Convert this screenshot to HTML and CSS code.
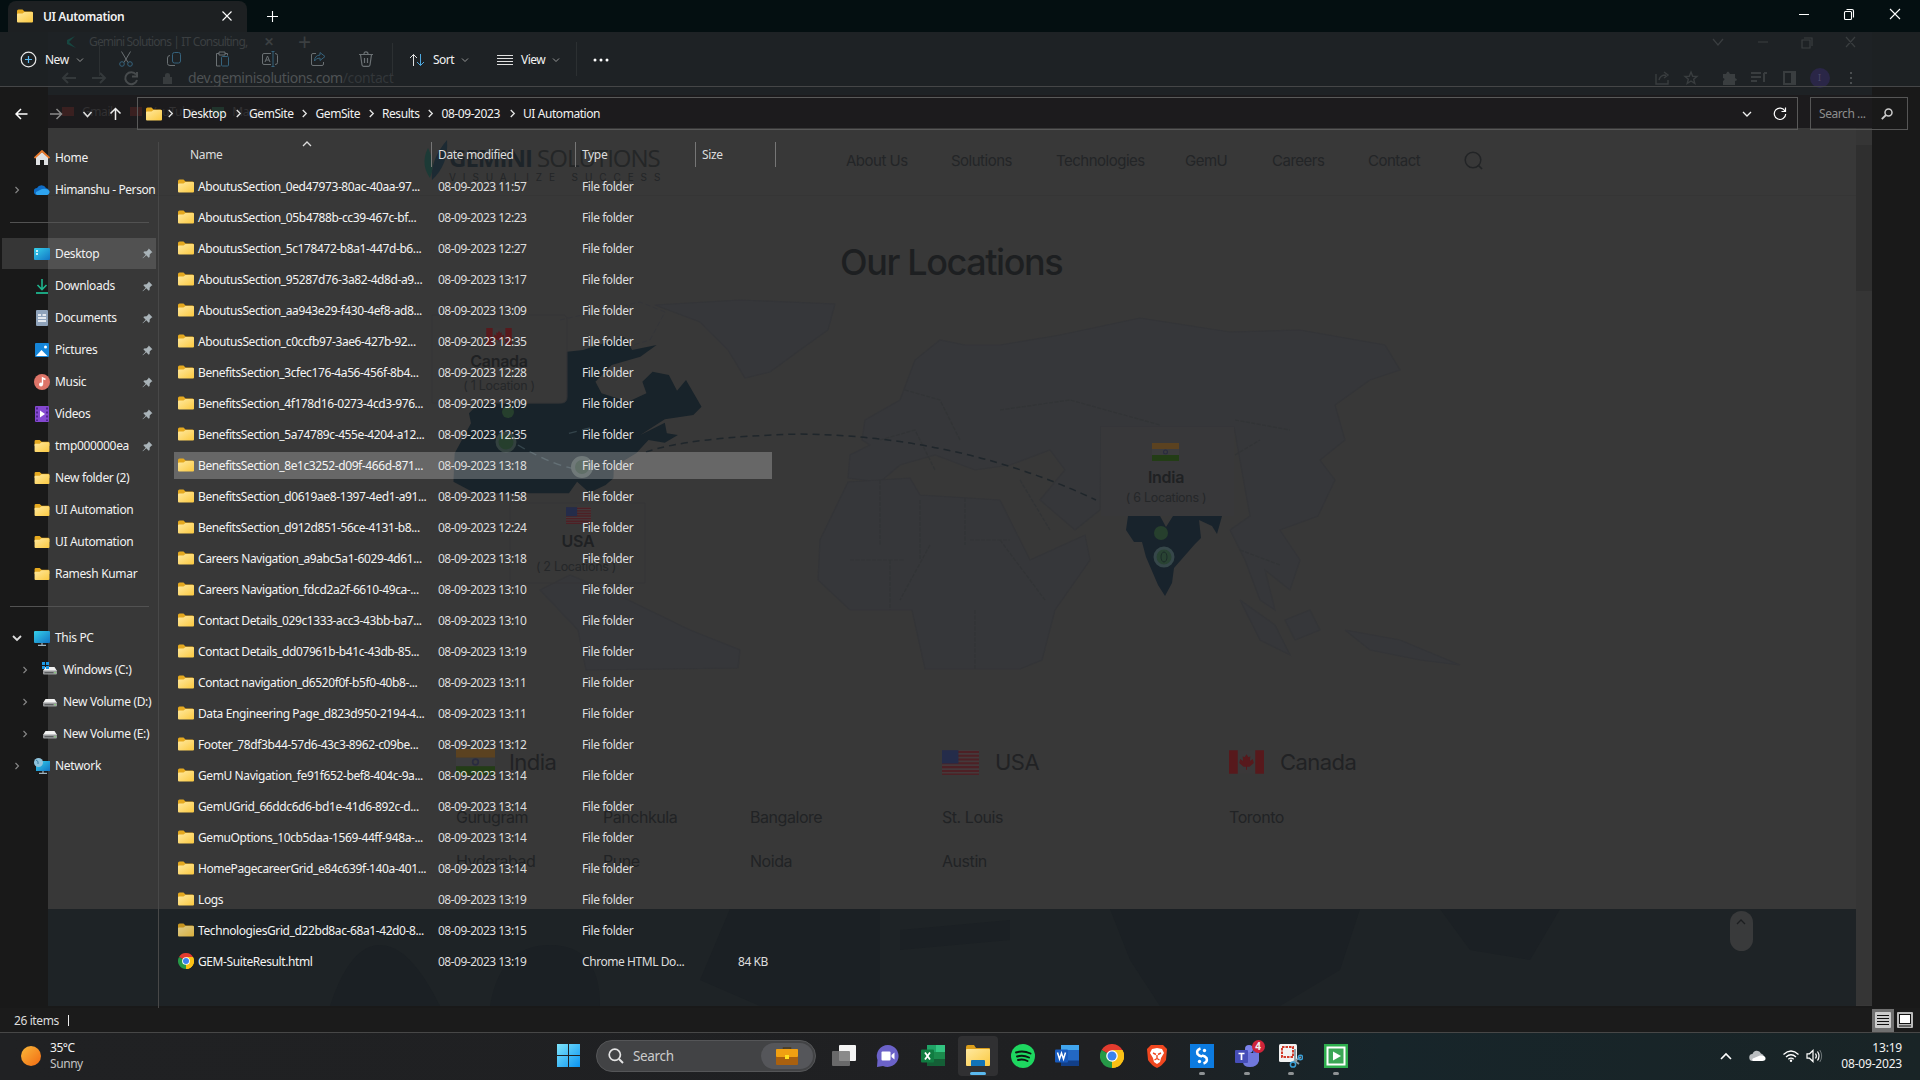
FILE: index.html
```html
<!DOCTYPE html>
<html lang="en">
<head>
<meta charset="utf-8">
<title>UI Automation</title>
<link rel="stylesheet" href="styles.css">
</head>
<body>
<svg class="defs" width="0" height="0" aria-hidden="true">
  <defs>
    <linearGradient id="gFolder" x1="0" y1="0" x2="1" y2="1"><stop offset="0" stop-color="#ffe9a0"/><stop offset="1" stop-color="#fbc940"/></linearGradient>
    <linearGradient id="gWin" x1="0" y1="0" x2="1" y2="1"><stop offset="0" stop-color="#7ee4fb"/><stop offset="1" stop-color="#0a94f2"/></linearGradient>
    <linearGradient id="gSun" x1="0" y1="0" x2="1" y2="1"><stop offset="0" stop-color="#f9b93a"/><stop offset="1" stop-color="#f26a12"/></linearGradient>
    <linearGradient id="gScreen" x1="0" y1="0" x2="1" y2="1"><stop offset="0" stop-color="#35d0ea"/><stop offset="1" stop-color="#1274c4"/></linearGradient>
  </defs>
  <symbol id="folder" viewBox="0 0 16 14"><path d="M0 2Q0 .5 1.500.5H5.500L7.500 2.500H14.500Q16 2.500 16 4V7H0Z" fill="#e5a91f"/><path d="M0 5.500Q0 4.500 1 4.500H5.500L7.500 3H15Q16 3 16 4V12.500Q16 13.500 15 13.500H1Q0 13.500 0 12.500Z" fill="url(#gFolder)"/></symbol>
  <symbol id="pin" viewBox="0 0 12 12"><path d="M7.400.6 11.400 4.600 10.200 5.300 8.400 7.100 8.300 9.900 7.300 10.600 4.700 8 1 11.300.6 11 4 7.300 1.500 4.700 2.200 3.700 5 3.600 6.700 1.800Z" fill="#a9b3b8"/></symbol>
  <symbol id="right" viewBox="0 0 8 10"><path d="M2 1 6 5 2 9" fill="none" stroke="currentColor" stroke-width="1.500"/></symbol>
  <symbol id="down" viewBox="0 0 10 8"><path d="M1 2 5 6 9 2" fill="none" stroke="currentColor" stroke-width="1.300"/></symbol>
  <symbol id="drive" viewBox="0 0 16 16"><path d="M3.500 5H12.500L15 9H1Z" fill="#f2f2f2"/><rect x="1" y="8.500" width="14" height="4" rx="1" fill="#9a9c9e"/><rect x="2.500" y="10" width="9" height="1.300" fill="#5a5c5e"/><rect x="12.500" y="10" width="1.300" height="1.300" fill="#7bd66a"/></symbol>
  <symbol id="chrome" viewBox="0 0 24 24"><path d="M12 12 1.600 6A12 12 0 0 1 22.400 6Z" fill="#e33b2e"/><path d="M12 12 22.400 6A12 12 0 0 1 12 24Z" fill="#fbc116"/><path d="M12 12V24A12 12 0 0 1 1.600 6Z" fill="#269947"/><path d="M12 6H22.400A12 12 0 0 1 12 24L17.200 15Z" fill="#fbc116"/><circle cx="12" cy="12" r="5.800" fill="#fff"/><circle cx="12" cy="12" r="4.500" fill="#3c82ee"/></symbol>
  <symbol id="flagIn" viewBox="0 0 36 24"><path d="M0 0H36V8H0Z" fill="#5b4220"/><path d="M0 8H36V16H0Z" fill="#3c3c3e"/><path d="M0 16H36V24H0Z" fill="#233d16"/><circle cx="18" cy="12" r="2.600" fill="none" stroke="#2a2c40" stroke-width="1.500"/></symbol>
  <symbol id="flagUs" viewBox="0 0 36 24"><path d="M0 0H36V24H0Z" fill="#45393b"/><path d="M0 1.700H36M0 5.400H36M0 9.100H36M0 12.800H36M0 16.500H36M0 20.200H36M0 23.600H36" stroke="#4d2025" stroke-width="2"/><path d="M0 0H16V13H0Z" fill="#242c4a"/></symbol>
  <symbol id="flagCa" viewBox="0 0 36 24"><path d="M0 0H36V24H0Z" fill="#3a3839"/><path d="M0 0H9V24H0ZM27 0H36V24H27Z" fill="#57191c"/><path d="M18 4 20 7 22 6 21.500 11 24.500 9 25.500 13 21 17H18.500V20H17.500V17H15L10.500 13 11.500 9 14.500 11 14 6 16 7Z" fill="#57191c"/></symbol>
</svg>

<main class="desktop">
  <section class="browser">
    <div class="b-tabs">
      <div class="b-tab"><svg width="11" height="14" viewBox="0 0 11 14"><path d="M9 1 3 7 10 13 1 9V5Z" fill="#174640"/></svg><span>Gemini Solutions | IT Consulting,</span><b>✕</b></div>
      <span class="b-plus">+</span>
      <svg class="b-win" width="150" height="16" viewBox="0 0 150 16"><path d="M5 5 10 11 15 5M50 8H60M94 6H102V14H94ZM96 4H104V12M138 3 147 13M147 3 138 13" fill="none" stroke="#3a3e40" stroke-width="1.200"/></svg>
    </div>
    <div class="b-tools">
      <svg width="80" height="16" viewBox="0 0 80 16"><path d="M16 8H3M8 3 3 8 8 13M32 8H45M40 3 45 8 40 13" fill="none" stroke="#34393b" stroke-width="2"/><path d="M76 4.500A6 6 0 1 0 77 10M77 2V6.500H72" fill="none" stroke="#474b4d" stroke-width="2"/></svg>
      <div class="b-url"><svg width="9" height="12" viewBox="0 0 9 12"><path d="M0 5H9V12H0ZM2 5V3Q2 1 4.500 1T7 3V5" fill="#383c3e"/></svg><span>dev.geminisolutions.com<i>/contact</i></span></div>
      <svg class="b-ext" width="208" height="20" viewBox="0 0 208 20"><g fill="none" stroke="#393d3f" stroke-width="1.400"><path d="M3 6V16H15V12M6 12Q7 7 13 7M11 4 15 7 11 10"/><path d="M38 4 39.700 8.200 44 8.400 40.700 11.200 41.800 15.500 38 13 34.200 15.500 35.300 11.200 32 8.400 36.300 8.200Z"/><path d="M98 5H108M98 9H108M98 13H104M111 5V14M111 5H114" stroke-width="2"/><path d="M131 4H142V16H131Z" stroke-width="2"/></g><path d="M70 6H73Q75 1 77 6H82V10Q86 12 82 13V17H70V13Q73 11 70 10ZM138 4H143V16H138Z" fill="#3a3e40"/><circle cx="167" cy="10" r="10" fill="#2a2647"/><text x="165" y="13" font-size="9" fill="#4a4866">I</text><path d="M197 4H199V6H197ZM197 9H199V11H197ZM197 14H199V16H197Z" fill="#4a4e50"/></svg>
    </div>
    <div class="b-marks"><i class="m-gmail"></i><span>Gmail</span><i class="m-yt"></i><span>YouTube</span><i class="m-maps"></i><span>Maps</span></div>
    <div class="page">
      <header class="site-head">
        <svg width="26" height="40" viewBox="0 0 26 40"><path d="M24 0Q26 24 9 40 7 20 24 0Z" fill="#1c2a33"/><path d="M5 8Q-3 24 7 38 13 24 5 8Z" fill="#1c3a36"/></svg>
        <div class="brand"><div class="brand-name"><b>GEMINI</b> SOLUTIONS</div><div class="brand-sub">VISUALIZE SUCCESS</div></div>
        <nav><span>About Us</span><span>Solutions</span><span>Technologies</span><span>GemU</span><span>Careers</span><span>Contact</span></nav>
        <svg class="site-find" width="20" height="20" viewBox="0 0 20 20"><circle cx="9" cy="9" r="7.800" fill="none" stroke="#222426" stroke-width="1.500"/><path d="M14 14 18 18" stroke="#222426" stroke-width="1.700"/></svg>
      </header>
      <h1>Our Locations</h1>
      <svg class="map" width="1824" height="420" viewBox="48 280 1824 420">
        <g fill="#36373a" stroke="#343538" stroke-width="1.200">
          <path d="M655 305 740 300 835 304 828 330 800 350 770 372 745 378 728 350 700 322Z"/>
          <path d="M540 590 570 575 620 596 690 630 740 650 738 668 586 670 578 630Z"/>
          <path d="M965 345 940 340 915 360 900 400 865 420 862 440 870 445 850 455 848 478 880 482 900 465 935 455 975 470 1010 465 1050 450 1065 470 1040 500 1075 530 1100 510 1101 427 1234 427 1250 516 1230 530 1245 560 1260 600 1275 610 1265 570 1290 590 1300 560 1280 530 1318 516 1335 480 1320 460 1345 440 1335 405 1370 380 1400 370 1385 345 1300 330 1230 332 1140 318 1060 335 1000 345Z"/>
          <path d="M848 482 910 478 920 495 1000 500 1030 560 1085 535 1090 560 1055 610 1042 660 1020 669 925 669 912 610 850 610 818 580 820 540Z"/>
          <path d="M1240 600 1260 640 1290 655 1275 625ZM1285 620 1310 610 1320 630 1295 640ZM1345 630 1400 640 1460 665 1420 660 1370 650Z"/>
        </g>
        <path d="M560 320 640 302 665 312 650 340 610 352" fill="none" stroke="#343538" stroke-dasharray="5 3"/>
        <path d="M1101 427H1234V516H1101Z" fill="#38383a"/>
        <path d="M880 480V545M920 500V560M965 498V545M890 560V610M930 545 900 600M970 540H1010M975 610V669M1000 540 1045 600M850 560H905M1020 480 1050 530M880 440 915 430 935 470M905 390 940 400 960 440M1000 410 1070 400 1160 425M1235 420 1290 430M1235 455 1260 440M1240 550 1280 565" fill="none" stroke="#323436" stroke-width="1.200" stroke-dasharray="4 1.500"/>
        <g transform="translate(420 120) scale(.408 .3333)">
          <path d="M360 695 400 690 500 650 520 690 580 675 540 710 470 735 430 785 445 820 510 845 555 820 545 785 570 755 610 765 630 812 652 780 690 860 670 885 600 898 540 945 600 908 605 940 632 945 600 968 560 960 530 1000 475 1040 474 1075 455 1095 415 1118 385 1085 365 1120 135 1120 82 1085 85 1000 125 910 120 880 145 850H340Q360 850 360 830Z" fill="#18232a"/>
          <path d="M240 975Q330 1040 400 1052M365 940 430 920" fill="none" stroke="#34444b" stroke-width="4" stroke-dasharray="20 14"/>
        </g>
        <path d="M432 315H563Q567 315 567 320V397Q567 403 561 403H432ZM510 503H645V583H510Z" fill="none" stroke="#353537"/>
        <path d="M646 452Q690 437 800 434 960 436 1096 500" fill="none" stroke="#1f262b" stroke-width="1.500" stroke-dasharray="7 5"/>
        <path d="M1128 516H1160L1166 527 1173 516H1222L1217 534 1212 526 1199 520 1201 538 1195 544 1174 568 1172 583 1165 596 1158 585 1146 557 1142 542H1134L1126 530Z" fill="#18232c"/>
        <g fill="#263f2d"><circle cx="508" cy="412" r="6"/><circle cx="506" cy="442" r="9" stroke="#33413f" stroke-width="3"/><circle cx="1161" cy="533" r="7"/></g>
        <circle cx="582" cy="467" r="9" fill="#2e4238" stroke="#445050" stroke-width="4"/>
        <circle cx="1164" cy="557" r="9" fill="#294333" stroke="#36474a" stroke-width="3"/><ellipse cx="1164" cy="557" rx="3" ry="5" fill="none" stroke="#1c2b29"/>
        <use href="#flagCa" x="486" y="328" width="26" height="17"/><use href="#flagUs" x="566" y="507" width="25" height="17"/><use href="#flagIn" x="1152" y="443" width="27" height="18"/>
        <g class="map-text"><text class="country" x="499" y="367">Canada</text><text x="499" y="390">( 1 Location )</text><text class="country" x="578" y="547">USA</text><text x="576" y="571">( 2 Locations )</text><text class="country" x="1166" y="483">India</text><text x="1166" y="502">( 6 Locations )</text></g>
      </svg>
      <div class="places">
        <div class="place india"><h2><svg width="39" height="26"><use href="#flagIn"/></svg>India</h2><div class="cities"><span>Gurugram</span><span>Panchkula</span><span>Bangalore</span><span>Hyderabad</span><span>Pune</span><span>Noida</span></div></div>
        <div class="place usa"><h2><svg width="37" height="25"><use href="#flagUs"/></svg>USA</h2><div class="cities"><span>St. Louis</span><span>Austin</span></div></div>
        <div class="place"><h2><svg width="35" height="24"><use href="#flagCa"/></svg>Canada</h2><div class="cities"><span>Toronto</span></div></div>
      </div>
      <footer class="site-foot"><svg width="1808" height="97" viewBox="48 909 1808 97"><g fill="#1b2024"><path d="M730 909H880V1006H760L700 980ZM900 930 1010 920V940L900 950ZM1110 909H1360L1340 970 1280 1006H1160L1130 960ZM490 1006Q500 945 550 945T600 1006ZM330 1006Q350 945 380 945T440 1006ZM1440 909H1560L1530 960 1470 950Z"/></g></svg><span class="totop"><svg width="12" height="8"><use href="#down"/></svg></span></footer>
      <i class="scroll"><i></i></i>
    </div>
  </section>

  <section class="explorer">
    <div class="titlebar">
      <div class="tab"><svg width="16" height="14"><use href="#folder"/></svg><b>UI Automation</b><svg width="10" height="10" viewBox="0 0 10 10"><path d="M.5.5 9.500 9.500M9.500.5.5 9.500" stroke="#fff" stroke-width="1.100"/></svg></div>
      <svg class="newtab" width="11" height="11" viewBox="0 0 11 11"><path d="M5.500 0V11M0 5.500H11" stroke="#fff" stroke-width="1.100"/></svg>
      <svg class="winbtns" width="104" height="14" viewBox="0 0 104 14"><g fill="none" stroke="#fff" stroke-width="1.100"><path d="M1 7.500H11M92 2 102 12M102 2 92 12"/><rect x="46.500" y="4.500" width="7" height="8" rx="1"/><path d="M48.500 2.500H54Q55.500 2.500 55.500 4V10.500"/></g></svg>
    </div>
    <div class="commands">
      <div class="cmd new"><svg width="17" height="17" viewBox="0 0 17 17"><circle cx="8.500" cy="8.500" r="7.300" fill="none" stroke="#e8e8e8" stroke-width="1.200"/><path d="M8.500 5V12M5 8.500H12" stroke="#5cb8ee" stroke-width="1.200"/></svg><span>New</span><svg class="c" width="8" height="6"><use href="#down"/></svg></div>
      <div class="tools">
        <svg viewBox="0 0 16 16"><path d="M3.500.5 10 11.500M12.500.5 6 11.500" stroke="#6b7174"/><g stroke="#35627c" fill="none"><circle cx="4" cy="13" r="2.300"/><circle cx="12" cy="13" r="2.300"/></g></svg>
        <svg viewBox="0 0 16 16"><path d="M4 4.500Q1.500 4.500 1.500 7V12.500Q1.500 14.500 4 14.500H9" fill="none" stroke="#6b7174"/><rect x="6.500" y="1.500" width="8" height="10.500" rx="2" fill="none" stroke="#35627c"/></svg>
        <svg viewBox="0 0 16 16"><path d="M5 2.500H2.500V15H6.500M11 2.500H13.500V4.500M5 1H11V4H5Z" fill="none" stroke="#6b7174"/><rect x="7.500" y="5.500" width="7" height="9.500" rx="1" fill="none" stroke="#35627c"/></svg>
        <svg viewBox="0 0 16 16"><path d="M9 2.500H2Q.5 2.500.5 4V12Q.5 13.500 2 13.500H9M13 2.500Q15.500 2.500 15.500 4.500V11.500Q15.500 13.500 13 13.500M3 11 5.500 5 8 11M4 9H7" fill="none" stroke="#6b7174"/><path d="M11 .5V15.500M9.500.5H12.500M9.500 15.500H12.500" stroke="#35627c"/></svg>
        <svg viewBox="0 0 16 16"><path d="M6 2.500H3Q1.500 2.500 1.500 4V13Q1.500 14.500 3 14.500H12Q13.500 14.500 13.500 13V11" fill="none" stroke="#6b7174"/><path d="M10 1.500 15 5.500 10 9.500V7Q6 7 4.500 10 4.500 4.500 10 4Z" fill="none" stroke="#35627c"/></svg>
        <svg viewBox="0 0 16 16"><path d="M1 3.500H15M2.500 3.500 4 14Q4.200 15.300 5.500 15.300H10.500Q11.800 15.300 12 14L13.500 3.500M6 3Q6 .8 8 .8T10 3M6.500 7V12M9.500 7V12" fill="none" stroke="#6b7174" stroke-width="1.200"/></svg>
      </div>
      <div class="cmd sort"><svg width="16" height="14" viewBox="0 0 16 14"><path d="M4.500 13V1.500M1 5 4.500 1.500 8 5" fill="none" stroke="#e0e0e0"/><path d="M11.500 1V12.500M8 9 11.500 12.500 15 9" fill="none" stroke="#4ea9e0"/></svg><span>Sort</span><svg class="c" width="8" height="6"><use href="#down"/></svg></div>
      <div class="cmd view"><svg width="16" height="12" viewBox="0 0 16 12"><path d="M0 1.500H16M0 4.500H16M0 7.500H16M0 10.500H16" stroke="#e0e0e0"/></svg><span>View</span><svg class="c" width="8" height="6"><use href="#down"/></svg></div>
      <svg class="dots" width="16" height="4" viewBox="0 0 16 4"><circle cx="2" cy="2" r="1.500"/><circle cx="8" cy="2" r="1.500"/><circle cx="14" cy="2" r="1.500"/></svg>
    </div>
    <div class="address">
      <svg class="nav" width="108" height="14" viewBox="0 0 108 14"><g fill="none" stroke-width="1.500"><path d="M12.500 7H1M6 2 1 7 6 12" stroke="#fff"/><path d="M35 7H46.500M41.500 2 46.500 7 41.500 12" stroke="#8a8a8a"/><path d="M68.500 5 72.500 9.500 76.500 5" stroke="#ddd"/><path d="M100.500 13V1.500M95.500 6.500 100.500 1.500 105.500 6.500" stroke="#eee"/></g></svg>
      <div class="pathbox">
        <svg width="16" height="14"><use href="#folder"/></svg>
        <svg class="r"><use href="#right"/></svg><span>Desktop</span><svg class="r"><use href="#right"/></svg><span>GemSite</span><svg class="r"><use href="#right"/></svg><span>GemSite</span><svg class="r"><use href="#right"/></svg><span>Results</span><svg class="r"><use href="#right"/></svg><span class="w58">08-09-2023</span><svg class="r"><use href="#right"/></svg><span class="w80">UI Automation</span>
        <svg class="drop" width="10" height="8"><use href="#down"/></svg>
        <svg width="14" height="14" viewBox="0 0 14 14"><path d="M12 4A5.700 5.700 0 1 0 12.700 7M12.500.5V4.500H8.500" fill="none" stroke="#fff" stroke-width="1.200"/></svg>
      </div>
      <div class="searchbox"><span>Search ...</span><svg width="12" height="12" viewBox="0 0 12 12"><circle cx="7.500" cy="4.500" r="3.500" fill="none" stroke="#ccc" stroke-width="1.500"/><path d="M5 7 .8 11.200" stroke="#ccc" stroke-width="1.800"/></svg></div>
    </div>
    <div class="body">
      <aside class="side">
        <div class="s"><svg viewBox="0 0 16 16"><path d="M2 7 8 2 14 7V15H10V10H6V15H2Z" fill="#dfe1e3"/><path d="M.5 8 8 1 15.500 8" fill="none" stroke="#e8792b" stroke-width="1.800"/></svg><span>Home</span></div>
        <div class="s"><svg class="r"><use href="#right"/></svg><svg viewBox="0 0 16 16"><path d="M3.500 13A3.500 3.500 0 0 1 3 6 5 5 0 0 1 12 6 3.700 3.700 0 0 1 13 13Z" fill="#0f6cc4"/><path d="M3 13Q1 12 2 10L8 7Q13 6 15.500 9 16 12 13 13Z" fill="#2ea4f0"/></svg><span class="account">Himanshu - Person</span></div>
        <hr>
        <div class="s on"><svg viewBox="0 0 16 16"><rect y="2" width="16" height="12" rx="1" fill="url(#gScreen)"/><path d="M2 5H4M2 8H4" stroke="#fff" stroke-width="1.500"/></svg><span>Desktop</span><svg class="pin"><use href="#pin"/></svg></div>
        <div class="s"><svg viewBox="0 0 16 16"><path d="M8 1V11M3.500 7 8 11.500 12.500 7" fill="none" stroke="#1eb58e" stroke-width="1.600"/><path d="M2 15H14" stroke="#1eb58e" stroke-width="1.800"/></svg><span>Downloads</span><svg class="pin"><use href="#pin"/></svg></div>
        <div class="s"><svg viewBox="0 0 16 16"><rect x="2" width="12" height="16" rx="1" fill="#8fa3bb"/><path d="M4 5H7M4 8H12M4 11H12M8.500 5H12" stroke="#fff" stroke-width="1.500"/></svg><span>Documents</span><svg class="pin"><use href="#pin"/></svg></div>
        <div class="s"><svg viewBox="0 0 16 16"><rect x="1" y="1" width="14" height="14" rx="1" fill="#1585d8"/><path d="M2 14 7.500 8 13.500 14Z" fill="#fff"/><circle cx="11.500" cy="5" r="1.500" fill="#fff"/></svg><span>Pictures</span><svg class="pin"><use href="#pin"/></svg></div>
        <div class="s"><svg viewBox="0 0 16 16"><circle cx="8" cy="8" r="8" fill="#dd7468"/><circle cx="7" cy="10.500" r="2" fill="#fff"/><path d="M8.500 10.500V4L11.500 5.500" fill="none" stroke="#fff" stroke-width="1.400"/></svg><span>Music</span><svg class="pin"><use href="#pin"/></svg></div>
        <div class="s"><svg viewBox="0 0 16 16"><rect x="1" width="14" height="16" rx="1" fill="#8448d0"/><path d="M3 1.500V15M13 1.500V15" stroke="#4f248e" stroke-width="2" stroke-dasharray="2 2"/><path d="M6 4.500 11 8 6 11.500Z" fill="#fff"/></svg><span>Videos</span><svg class="pin"><use href="#pin"/></svg></div>
        <div class="s"><svg viewBox="0 0 16 16"><use href="#folder" y="1.500" width="16" height="13"/></svg><span>tmp000000ea</span><svg class="pin"><use href="#pin"/></svg></div>
        <div class="s"><svg viewBox="0 0 16 16"><use href="#folder" y="1.500" width="16" height="13"/></svg><span>New folder (2)</span></div>
        <div class="s"><svg viewBox="0 0 16 16"><use href="#folder" y="1.500" width="16" height="13"/></svg><span>UI Automation</span></div>
        <div class="s"><svg viewBox="0 0 16 16"><use href="#folder" y="1.500" width="16" height="13"/></svg><span>UI Automation</span></div>
        <div class="s"><svg viewBox="0 0 16 16"><use href="#folder" y="1.500" width="16" height="13"/></svg><span>Ramesh Kumar</span></div>
        <hr>
        <div class="s"><svg class="r open" viewBox="0 0 10 8"><path d="M1 2 5 6 9 2" fill="none" stroke="#ddd" stroke-width="1.800"/></svg><svg viewBox="0 0 16 16"><rect y="1" width="16" height="12" rx="1" fill="url(#gScreen)"/><path d="M8 13V15.300M4 15.300H12" stroke="#9fb4c0" stroke-width="1.200"/></svg><span>This PC</span></div>
        <div class="s sub"><svg class="r"><use href="#right"/></svg><svg viewBox="0 0 16 16"><use href="#drive"/><path d="M0 0H3V3H0ZM4 0H7V3H4ZM0 4H3V7H0ZM4 4H7V7H4Z" fill="#1e9be8"/></svg><span>Windows (C:)</span></div>
        <div class="s sub"><svg class="r"><use href="#right"/></svg><svg viewBox="0 0 16 16"><use href="#drive"/></svg><span>New Volume (D:)</span></div>
        <div class="s sub"><svg class="r"><use href="#right"/></svg><svg viewBox="0 0 16 16"><use href="#drive"/></svg><span>New Volume (E:)</span></div>
        <div class="s"><svg class="r"><use href="#right"/></svg><svg viewBox="0 0 16 16"><rect x="2" y="3" width="14" height="10" fill="url(#gScreen)"/><path d="M9 13V15.300M5 15.300H13" stroke="#9fb4c0" stroke-width="1.200"/><circle cx="4.500" cy="4.500" r="4.500" fill="#8fc3dc"/><path d="M2 2Q5 3 4 6" stroke="#3b7fa4" fill="none"/></svg><span>Network</span></div>
      </aside>
      <div class="files">
        <div class="head"><span>Name<svg width="10" height="8"><use href="#down"/></svg></span><span>Date modified</span><span>Type</span><span>Size</span></div>
        <div class="f"><svg><use href="#folder"/></svg><span>AboutusSection_0ed47973-80ac-40aa-97...</span><span>08-09-2023 11:57</span><span>File folder</span></div>
        <div class="f"><svg><use href="#folder"/></svg><span>AboutusSection_05b4788b-cc39-467c-bf...</span><span>08-09-2023 12:23</span><span>File folder</span></div>
        <div class="f"><svg><use href="#folder"/></svg><span>AboutusSection_5c178472-b8a1-447d-b6...</span><span>08-09-2023 12:27</span><span>File folder</span></div>
        <div class="f"><svg><use href="#folder"/></svg><span>AboutusSection_95287d76-3a82-4d8d-a9...</span><span>08-09-2023 13:17</span><span>File folder</span></div>
        <div class="f"><svg><use href="#folder"/></svg><span>AboutusSection_aa943e29-f430-4ef8-ad8...</span><span>08-09-2023 13:09</span><span>File folder</span></div>
        <div class="f"><svg><use href="#folder"/></svg><span>AboutusSection_c0ccfb97-3ae6-427b-92...</span><span>08-09-2023 12:35</span><span>File folder</span></div>
        <div class="f"><svg><use href="#folder"/></svg><span>BenefitsSection_3cfec176-4a56-456f-8b4...</span><span>08-09-2023 12:28</span><span>File folder</span></div>
        <div class="f"><svg><use href="#folder"/></svg><span>BenefitsSection_4f178d16-0273-4cd3-976...</span><span>08-09-2023 13:09</span><span>File folder</span></div>
        <div class="f"><svg><use href="#folder"/></svg><span>BenefitsSection_5a74789c-455e-4204-a12...</span><span>08-09-2023 12:35</span><span>File folder</span></div>
        <div class="f sel"><svg><use href="#folder"/></svg><span>BenefitsSection_8e1c3252-d09f-466d-871...</span><span>08-09-2023 13:18</span><span>File folder</span></div>
        <div class="f"><svg><use href="#folder"/></svg><span>BenefitsSection_d0619ae8-1397-4ed1-a91...</span><span>08-09-2023 11:58</span><span>File folder</span></div>
        <div class="f"><svg><use href="#folder"/></svg><span>BenefitsSection_d912d851-56ce-4131-b8...</span><span>08-09-2023 12:24</span><span>File folder</span></div>
        <div class="f"><svg><use href="#folder"/></svg><span>Careers Navigation_a9abc5a1-6029-4d61...</span><span>08-09-2023 13:18</span><span>File folder</span></div>
        <div class="f"><svg><use href="#folder"/></svg><span>Careers Navigation_fdcd2a2f-6610-49ca-...</span><span>08-09-2023 13:10</span><span>File folder</span></div>
        <div class="f"><svg><use href="#folder"/></svg><span>Contact Details_029c1333-acc3-43bb-ba7...</span><span>08-09-2023 13:10</span><span>File folder</span></div>
        <div class="f"><svg><use href="#folder"/></svg><span>Contact Details_dd07961b-b41c-43db-85...</span><span>08-09-2023 13:19</span><span>File folder</span></div>
        <div class="f"><svg><use href="#folder"/></svg><span>Contact navigation_d6520f0f-b5f0-40b8-...</span><span>08-09-2023 13:11</span><span>File folder</span></div>
        <div class="f"><svg><use href="#folder"/></svg><span>Data Engineering Page_d823d950-2194-4...</span><span>08-09-2023 13:11</span><span>File folder</span></div>
        <div class="f"><svg><use href="#folder"/></svg><span>Footer_78df3b44-57d6-43c3-8962-c09be...</span><span>08-09-2023 13:12</span><span>File folder</span></div>
        <div class="f"><svg><use href="#folder"/></svg><span>GemU Navigation_fe91f652-bef8-404c-9a...</span><span>08-09-2023 13:14</span><span>File folder</span></div>
        <div class="f"><svg><use href="#folder"/></svg><span>GemUGrid_66ddc6d6-bd1e-41d6-892c-d...</span><span>08-09-2023 13:14</span><span>File folder</span></div>
        <div class="f"><svg><use href="#folder"/></svg><span>GemuOptions_10cb5daa-1569-44ff-948a-...</span><span>08-09-2023 13:14</span><span>File folder</span></div>
        <div class="f"><svg><use href="#folder"/></svg><span>HomePagecareerGrid_e84c639f-140a-401...</span><span>08-09-2023 13:14</span><span>File folder</span></div>
        <div class="f"><svg><use href="#folder"/></svg><span>Logs</span><span>08-09-2023 13:19</span><span>File folder</span></div>
        <div class="f"><svg class="dim"><use href="#folder"/></svg><span>TechnologiesGrid_d22bd8ac-68a1-42d0-8...</span><span>08-09-2023 13:15</span><span>File folder</span></div>
        <div class="f"><svg class="ch"><use href="#chrome"/></svg><span>GEM-SuiteResult.html</span><span>08-09-2023 13:19</span><span>Chrome HTML Do...</span><span class="size">84 KB</span></div>
      </div>
    </div>
    <div class="status"><span>26 items</span><i></i>
      <div class="vbtn on"><svg width="16" height="16" viewBox="0 0 16 16"><rect width="16" height="16" rx="1" fill="#ccc"/><path d="M2 3.500H14M2 6.500H14M2 9.500H14M2 12.500H14" stroke="#111"/></svg></div>
      <div class="vbtn"><svg width="16" height="16" viewBox="0 0 16 16"><rect width="16" height="16" rx="1" fill="#bbb"/><rect x="2.500" y="2.500" width="11" height="9" fill="#fff" stroke="#111"/><path d="M2 14H14" stroke="#111"/></svg></div>
    </div>
  </section>

  <section class="taskbar">
    <div class="weather"><svg width="20" height="20"><circle cx="10" cy="10" r="10" fill="url(#gSun)"/></svg><div><b>35°C</b><span>Sunny</span></div></div>
    <svg class="start" width="23" height="23" viewBox="0 0 23 23"><path d="M0 0H11V11H0ZM12 0H23V11H12ZM0 12H11V23H0ZM12 12H23V23H12Z" fill="url(#gWin)"/></svg>
    <div class="find"><svg width="16" height="16" viewBox="0 0 16 16"><circle cx="6.800" cy="6.800" r="5.600" fill="none" stroke="#e4e4e4" stroke-width="1.700"/><path d="M11 11 15 15" stroke="#e4e4e4" stroke-width="2"/></svg><span>Search</span><div class="bag"><svg width="22" height="18" viewBox="0 0 22 18"><path d="M7.500 3V1H14.500V3" fill="none" stroke="#4a3a1c" stroke-width="1.500"/><rect y="2" width="22" height="16" rx="1" fill="#a9600e"/><rect y="2" width="22" height="8" rx="1" fill="#f0a012"/><rect x="9" y="8" width="4" height="4" fill="#ffdf20"/></svg></div></div>
    <div class="apps">
      <div class="app"><svg viewBox="0 0 24 24"><rect x="7" y="1" width="17" height="16" rx="1" fill="#f4f4f4"/><rect x="0" y="7" width="18" height="15" rx="1" fill="#777" opacity=".85"/></svg></div>
      <div class="app"><svg viewBox="0 0 24 24"><path d="M12 1A11 11 0 1 1 7 22L1 23 1.500 16A11 11 0 0 1 12 1Z" fill="#6b62c8"/><rect x="5.500" y="7.500" width="9" height="9" rx="1" fill="#fff"/><path d="M15.500 11 18.500 8.500V15.500L15.500 13Z" fill="#fff"/></svg></div>
      <div class="app"><svg viewBox="0 0 24 24"><path d="M6 1H24V22H6Z" fill="#1b8a4c"/><path d="M6 1H15V8H6Z" fill="#20a366"/><path d="M15 1H24V8H15Z" fill="#33c481"/><path d="M6 15H24V22H6Z" fill="#145f36"/><rect y="5.500" width="13" height="13" rx="1" fill="#107c41"/><path d="M4 8.500 9 15.500M9 8.500 4 15.500" stroke="#fff" stroke-width="1.800"/></svg></div>
      <div class="app active"><svg viewBox="0 0 24 24"><path d="M0 3Q0 1 2 1H8L10 4H23Q24 4 24 5V10H0Z" fill="#dc9e1a"/><rect y="5" width="24" height="17" rx="1" fill="url(#gFolder)"/><path d="M5 22V17Q5 16 6 16H18Q19 16 19 17V22Z" fill="#1173b8"/></svg></div>
      <div class="app"><svg viewBox="0 0 24 24"><circle cx="12" cy="12" r="12" fill="#1ed760"/><path d="M5 8.500Q12 6 19.500 9.500M6 12.500Q12 10.500 18 13.500M7 16Q12 14.500 16.500 17" fill="none" stroke="#0c1810" stroke-width="1.900" stroke-linecap="round"/></svg></div>
      <div class="app"><svg viewBox="0 0 24 24"><path d="M6 1H24V22H6Z" fill="#2368c4"/><path d="M6 1H24V6H6Z" fill="#41a5ee"/><path d="M6 16.500H24V22H6Z" fill="#123f88"/><rect y="5.500" width="13" height="13" rx="1" fill="#185abd"/><path d="M2.500 8.500 4.500 15 6.500 9 8.500 15 10.500 8.500" fill="none" stroke="#fff" stroke-width="1.500"/></svg></div>
      <div class="app"><svg viewBox="0 0 24 24"><use href="#chrome"/></svg></div>
      <div class="app"><svg viewBox="0 0 24 24"><path d="M6 1H18L22 5 21 16Q18 21 12 24 6 21 3 16L2 5Z" fill="#f1471f"/><path d="M7 5 12 4 17 5 19 9 16 14 15 18 12 20 9 18 8 14 5 9Z" fill="#fff"/><path d="M8 9 11 10.500M16 9 13 10.500M12 11V14M9.500 16 12 14.500 14.500 16" fill="none" stroke="#f1471f" stroke-width="1.400"/></svg></div>
      <div class="app run"><svg viewBox="0 0 24 24"><rect width="24" height="24" fill="#0c7be0"/><path d="M10.500 4.500Q6 6 7.500 10 9 12 12 12.500M13.500 19.500Q18 18 16.500 14 15 12 12 11.500" fill="none" stroke="#fff" stroke-width="2.600"/><circle cx="14.500" cy="6.500" r="1.700" fill="#fff"/><circle cx="9.500" cy="17.500" r="1.700" fill="#fff"/></svg></div>
      <div class="app run"><svg viewBox="0 0 24 24"><circle cx="14" cy="5" r="4" fill="#7b83eb"/><circle cx="21" cy="8" r="3" fill="#5059c9"/><path d="M8 9H24V17Q22 23 15 23T8 18Z" fill="#7078dc"/><rect y="6" width="13" height="13" rx="1" fill="#464eb8"/><path d="M3.500 9.500H9.500M6.500 9.500V16" stroke="#fff" stroke-width="1.700"/></svg><em>4</em></div>
      <div class="app run"><svg viewBox="0 0 24 24"><rect width="18" height="18" rx="1.500" fill="#f2f2f2"/><rect x="3" y="3" width="11" height="10" fill="none" stroke="#d23b2a" stroke-width="2" stroke-dasharray="2.500 1"/><path d="M16 5V17L20 20M22 13 14 18" fill="none" stroke="#8a9aa3" stroke-width="1.800"/><circle cx="14" cy="20.500" r="2.600" fill="none" stroke="#3aa0d8" stroke-width="1.500"/><circle cx="21.500" cy="13.500" r="2.200" fill="none" stroke="#3aa0d8" stroke-width="1.500"/></svg></div>
      <div class="app run"><svg viewBox="0 0 24 24"><rect width="24" height="24" fill="#2eae4e"/><rect x="3.500" y="3.500" width="17" height="17" fill="#3aa655" stroke="#fff" stroke-width="2"/><path d="M9 7.500 17 12 9 16.500Z" fill="#fff"/></svg></div>
    </div>
    <div class="tray">
      <svg width="12" height="8" viewBox="0 0 12 8"><path d="M1 7 6 2 11 7" fill="none" stroke="#fff" stroke-width="1.600"/></svg>
      <svg width="17" height="12" viewBox="0 0 17 12"><path d="M4 11A3.500 3.500 0 0 1 3.500 4 4.500 4.500 0 0 1 12 3.500 4 4 0 0 1 13 11Z" fill="#b9bdc0"/><path d="M4 11Q2 9 5 8L11 5.500Q16 5 16.500 8T13 11Z" fill="#fff"/></svg>
      <svg width="16" height="12" viewBox="0 0 16 12"><g fill="none" stroke="#fff" stroke-width="1.300"><path d="M.5 4.500Q8-2.500 15.500 4.500M3 7Q8 2.500 13 7M5.300 9.200Q8 7 10.700 9.200"/></g><circle cx="8" cy="10.800" r="1.200" fill="#fff"/></svg>
      <svg width="17" height="14" viewBox="0 0 17 14"><path d="M1 4.800H3.500L7 1.500V12.500L3.500 9.200H1Z" fill="none" stroke="#fff" stroke-width="1.200"/><path d="M9.500 4.500Q11.200 7 9.500 9.500M11.500 2.500Q14.500 7 11.500 11.500" fill="none" stroke="#fff" stroke-width="1.200"/><path d="M13.800 1Q17.500 7 13.800 13" fill="none" stroke="#6d7577"/></svg>
    </div>
    <div class="clock"><span>13:19</span><span>08-09-2023</span></div>
  </section>
</main>
</body>
</html>
```
FILE: styles.css
```css
* { box-sizing: border-box; }
html, body { margin: 0; height: 100%; overflow: hidden; }
body { background: #191919; color: #f2f2f2; font: 12px/16px "Noto Sans", "Open Sans", sans-serif; letter-spacing: -.43px; white-space: nowrap; }
svg { display: block; flex: none; }
.defs { position: absolute; }
i { font-style: normal; }
.desktop { position: relative; width: 1920px; height: 1080px; background: linear-gradient(#1d2123 0 86px, #191919 86px); }

/* Browser window lying behind the translucent explorer */
.browser { position: absolute; left: 48px; top: 30px; width: 1824px; height: 976px; display: flex; flex-direction: column; color: #3a3e40; background: #1e2225; }
.b-tabs { height: 28px; display: flex; align-items: center; padding: 0 8px 4px 18px; font-family: "Noto Sans"; }
.b-tabs > *, .b-tools { color: #3b3f41; }
.b-tab { display: flex; align-items: center; gap: 12px; width: 209px; }
.b-tab span { width: 161px; letter-spacing: -.85px; }
.b-tab b { font-size: 12px; margin-left: 2px; }
.b-plus { font-size: 23px; margin-left: 23px; }
.b-win { margin-left: auto; margin-right: 6px; }
.b-tools { height: 37px; display: flex; align-items: center; padding: 2px 0 0 12px; }
.b-url { display: flex; align-items: center; gap: 16px; margin-left: 23px; font-size: 14px; color: #4e5254; letter-spacing: -.4px; }
.b-url i { color: #33373a; }
.b-ext { margin-left: auto; margin-right: 11px; }
.b-marks { height: 33px; background: #1c1b1d; display: flex; align-items: center; gap: 8px; padding: 0 14px 0; color: #323133; }
.b-marks i { width: 12px; height: 9px; background: #3a2020; }
.b-marks span + i { margin-left: 9px; }
.b-marks .m-maps { background: #20342c; }
.page { flex: 1; position: relative; background: #383838; font-family: Inter, sans-serif; display: flex; flex-direction: column; color: #232527; }
.site-head { height: 68px; padding: 12px 0 0 375px; display: flex; border-bottom: 1px solid #353535; }
.brand { width: 217px; padding-top: 6px; }
.brand-name { font: 24px/24px "Open Sans", sans-serif; letter-spacing: -1px; color: #242627; }
.brand-name b { font-weight: 700; color: #1d2429; }
.brand-sub { font-size: 10px; line-height: 12px; letter-spacing: 6.900px; margin-top: 1px; }
.site-head nav { display: flex; margin-left: 180px; padding-top: 12px; font-size: 15px; line-height: 18px; letter-spacing: -.5px; width: 618px; }
.site-head nav span { width: 105px; flex: none; }
.site-head nav span:nth-child(3) { width: 129px; }
.site-head nav span:nth-child(4) { width: 87px; }
.site-head nav span:nth-child(5) { width: 96px; }
.site-find { margin-top: 11px; }
h1 { margin: 40px 0 0; padding-left: 792px; font: 500 36px/52px Inter, sans-serif; letter-spacing: -1.4px; color: #1d1f21; height: 52px; }
.map { margin-top: -8px; }
.map-text { font: 12.500px Inter, sans-serif; letter-spacing: -.3px; text-anchor: middle; fill: #252729; }
.map-text .country { font-size: 16px; font-weight: 600; fill: #1f2123; }
.places { display: flex; padding: 47px 0 0 408px; height: 209px; }
.place { width: 250px; }
.india { width: 486px; }
.usa { width: 287px; }
h2 { margin: 0; display: flex; align-items: center; gap: 16px; height: 30px; font: 400 22px/30px Inter, sans-serif; letter-spacing: -.55px; color: #212224; }
.india h2 { gap: 14px; }
.cities { display: grid; grid-template-columns: repeat(3, 147px); grid-auto-rows: 44px; margin-top: 18px; font-size: 16px; line-height: 44px; letter-spacing: -.45px; color: #212325; }
.usa .cities { grid-template-columns: 147px; }
.site-foot { position: relative; width: 1808px; height: 97px; background: #1e2326; }
.totop { position: absolute; left: 1682px; top: 2px; width: 23px; height: 40px; border-radius: 12px; background: #393a3b; color: #1c1e20; padding: 7px 5px; }
.totop svg { transform: scaleY(-1); }
.scroll { position: absolute; right: 0; top: 0; width: 16px; height: 877px; background: #353535; padding-top: 17px; }
.scroll i { display: block; height: 146px; background: #2f2f2f; }

/* Explorer */
.explorer { position: absolute; inset: 0 0 48px; display: flex; flex-direction: column; }
.titlebar { height: 32px; background: #040f11; display: flex; align-items: flex-start; padding-left: 8px; }
.tab { width: 239px; height: 31px; margin-top: 1px; border-radius: 8px 8px 0 0; background: #1d2022; display: flex; align-items: center; padding: 0 15px 2px 9px; gap: 10px; }
.tab b { font-weight: 600; letter-spacing: -.4px; flex: 1; padding-top: 2px; }
.newtab { margin: 11px 0 0 20px; }
.winbtns { margin: 7px 18px 0 auto; }
.commands { height: 55px; border-bottom: 1px solid #454647; display: flex; align-items: center; padding: 0 0 1px 20px; }
.cmd { display: flex; align-items: center; gap: 8px; height: 34px; padding-top: 2px; letter-spacing: -.5px; }
.cmd .c { color: #999; margin-left: -1px; }
.new { width: 80px; border-right: 1px solid #2c3032; }
.tools { display: flex; gap: 32px; width: 293px; padding: 8px 0 8px 18px; border-right: 1px solid #2c3032; }
.tools svg { width: 16px; height: 16px; }
.sort { margin-left: 16px; width: 88px; }
.view { width: 80px; border-right: 1px solid #2c3032; }
.dots { margin-left: 16px; fill: #fff; position: relative; top: 1px; }
.address { display: flex; height: 55px; padding: 10px 12px 12px 15px; align-items: stretch; }
.address .nav { margin-top: 10px; width: 108px; }
.pathbox { margin-left: 14px; width: 1661px; border: 1px solid #595959; display: flex; align-items: center; padding: 0 10px 0 8px; }
.r { width: 6px; height: 9px; color: #e6e6e6; }
.pathbox .r { margin: 0 7.500px 0 7px; width: 7px; }
.pathbox svg:first-child + .r { margin: 0 8.500px 0 5px; }
.pathbox span { width: 45px; flex: none; }
.pathbox span:nth-of-type(4) { width: 38px; }
.pathbox .w58 { width: 60px; }
.pathbox .w80 { width: 80px; }
.drop { margin-left: auto; margin-right: 21px; }
.searchbox { margin-left: 12px; width: 98px; border: 1px solid #565656; display: flex; align-items: center; justify-content: space-between; padding: 0 14px 0 8px; color: #8e8e8e; }
.body { display: flex; height: 866px; }
.side { width: 159px; padding: 0 2px 0 2px; border-right: 1px solid #484848; overflow: hidden; }
.s { display: flex; align-items: center; height: 32px; padding-left: 32px; gap: 5px; letter-spacing: -.33px; }
.s > svg { width: 16px; height: 16px; }
.s > .r { width: 6px; height: 10px; margin: 0 9px 0 -20px; color: #888; }
.s > .r.open { width: 10px; height: 8px; margin: 0 7px 0 -22px; }
.s.sub { padding-left: 40px; }
.s > .pin { width: 11px; height: 11px; margin: 0 3px 0 auto; }
.account { letter-spacing: -.42px; }
.s.on { background: rgba(255,255,255,.13); height: 31px; margin-bottom: 1px; }
.side hr { border: 0; border-top: 1px solid #525252; margin: 15.500px 7px 15.500px 8px; height: 0; }
.files { padding: 0 0 0 16px; width: 640px; }
.head { display: flex; height: 25px; margin-bottom: 6px; color: #ddd; line-height: 25px; letter-spacing: -.35px; }
.head span { border-right: 1px solid #767676; padding-left: 6px; width: 144px; }
.head span:first-child { width: 257px; padding-left: 15px; display: flex; align-items: flex-start; gap: 80px; }
.head svg { transform: scaleY(-1); margin-top: -2px; }
.head span:nth-child(3) { width: 120px; }
.head span:nth-child(4) { width: 80px; }
.f { display: grid; grid-template-columns: 20px 240px 144px 120px 66px; align-items: center; height: 27px; margin: 0 0 4px -1px; width: 598px; padding-left: 4px; }
.f svg { width: 16px; height: 14px; margin-top: -2px; }
.f .ch { height: 16px; }
.f .dim { opacity: .85; }
.f span { color: #dedede; }
.f span:nth-of-type(1) { color: #f4f4f4; letter-spacing: -.4px; }
.f span:nth-of-type(2) { letter-spacing: -.5px; }
.f .size { text-align: right; }
.sel { background: rgba(255,255,255,.24); }
.status { height: 24px; flex: none; background: #1b1b1b; display: flex; align-items: center; padding-left: 14px; color: #ddd; letter-spacing: -.4px; }
.status > span { padding-top: 2px; }
.status > i { width: 1px; height: 11px; background: #eee; margin: 0 auto 0 9px; }
.vbtn { width: 22px; height: 23px; padding: 3px; }
.vbtn + .vbtn { margin-right: 4px; }
.vbtn.on { background: #707070; }

/* Taskbar */
.taskbar { position: absolute; left: 0; right: 0; bottom: 0; height: 48px; padding-bottom: 2px; border-top: 1px solid #474747; background: linear-gradient(90deg, #202123 0, #1f2022 58%, #17252a 72%, #192426 100%); display: flex; align-items: center; }
.weather { display: flex; gap: 9px; align-items: center; width: 557px; padding-left: 21px; }
.weather b, .weather span, .clock span { display: block; font-weight: 400; line-height: 16px; }
.weather span { color: #c4c4c4; }
.find { margin-left: 16px; width: 220px; height: 32px; border-radius: 16px; background: #424345; border: 1px solid #555658; display: flex; align-items: center; padding: 0 2px 0 11px; gap: 9px; font-size: 13.500px; color: #ccc; letter-spacing: -.35px; }
.bag { margin-left: auto; width: 52px; height: 26px; border-radius: 13px; background: #55565a; display: flex; align-items: center; justify-content: center; }
.apps { display: flex; margin-left: 5.500px; }
.app { position: relative; width: 40px; height: 40px; margin-right: 4.800px; padding: 8px; border-radius: 4px; }
.app svg { width: 24px; height: 24px; }
.app:nth-child(1) { margin-left: 2px; }
.active { background: #303032; }
.active::after, .run::after { content: ""; position: absolute; bottom: 1px; left: 17px; width: 6px; height: 3px; border-radius: 2px; background: #8e9294; }
.active::after { left: 12px; width: 16px; background: #5ab9ee; }
.app em { position: absolute; right: 2px; top: 4px; width: 13px; height: 13px; border-radius: 7px; background: #d0243a; font: 700 10px/13px "Noto Sans", sans-serif; text-align: center; letter-spacing: 0; }
.tray { display: flex; align-items: center; margin-left: auto; }
.tray svg { margin-right: 17px; }
.tray svg:nth-child(3) { margin-right: 7px; }
.tray svg:nth-child(4) { margin-right: 15.500px; }
.clock { text-align: right; margin-right: 18px; width: 64px; letter-spacing: -.2px; padding-top: 1px; }
```
